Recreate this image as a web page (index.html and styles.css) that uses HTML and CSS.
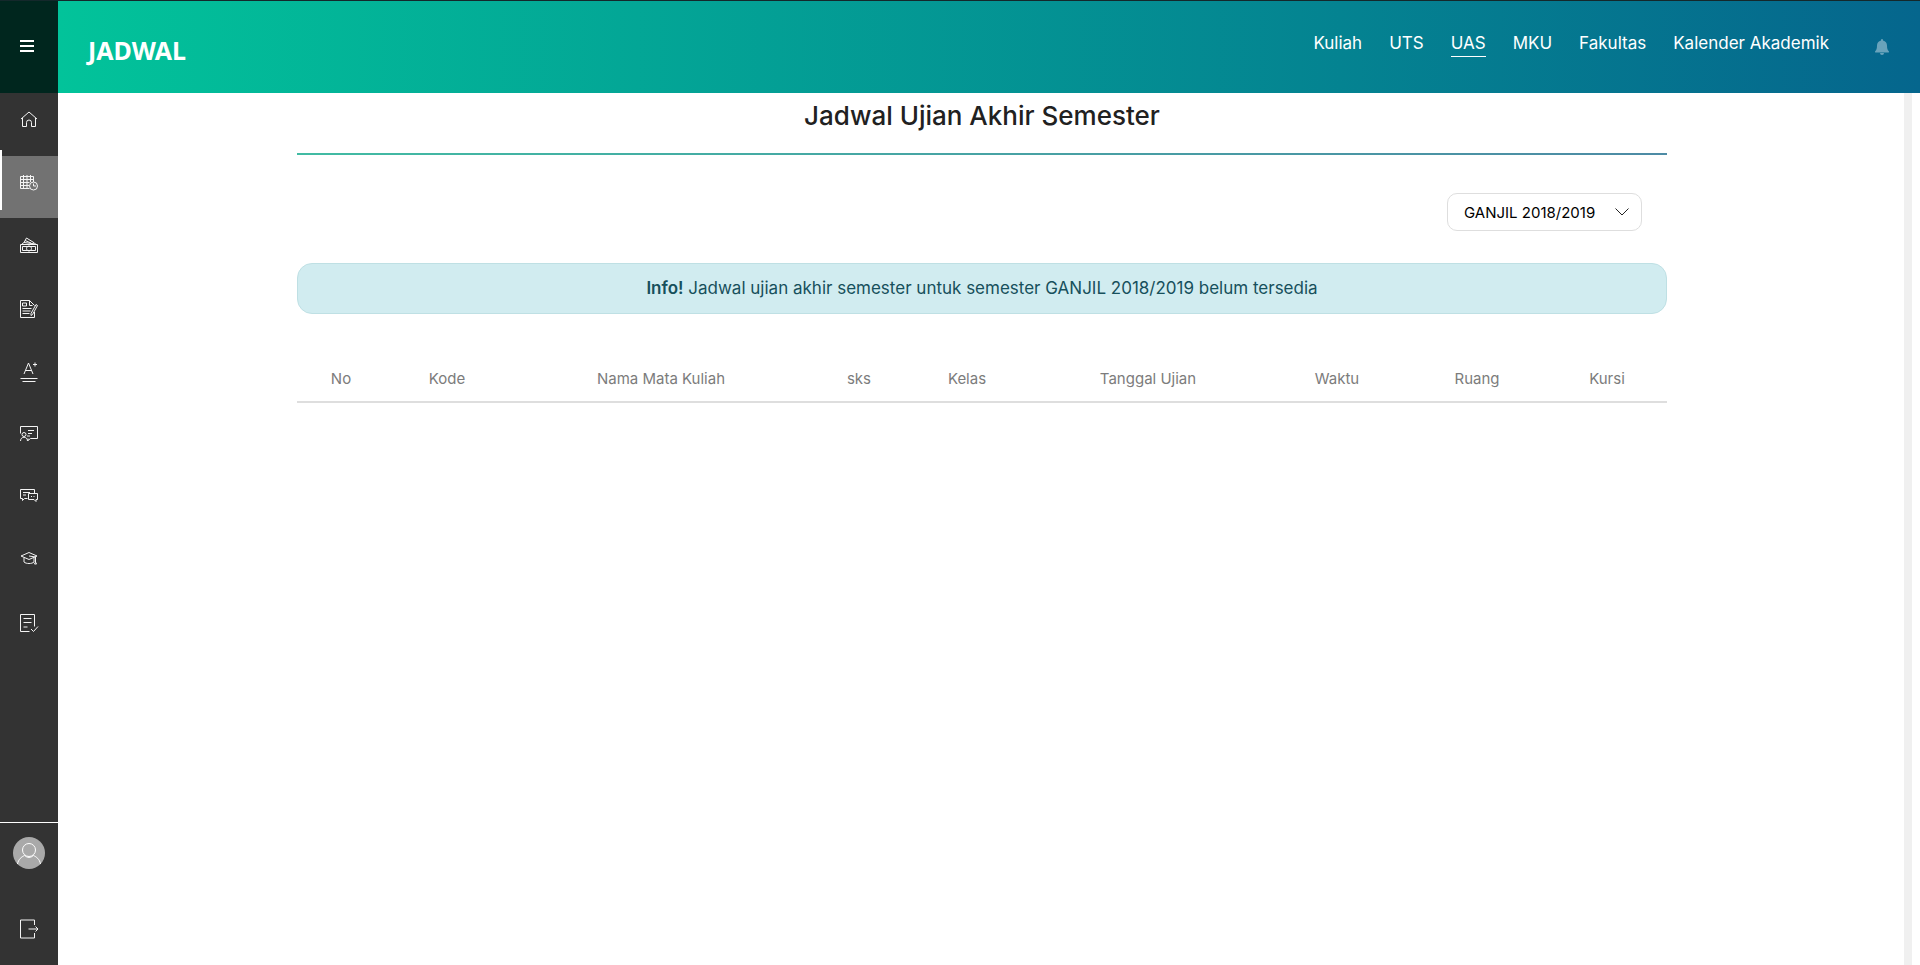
FILE: index.html
```html
<!DOCTYPE html>
<html lang="id">
<head>
<meta charset="utf-8">
<meta name="viewport" content="width=device-width, initial-scale=1">
<title>Jadwal Ujian Akhir Semester</title>
<link rel="stylesheet" href="styles.css">
</head>
<body>
<div class="app">
  <aside class="sidebar">
    <button class="menu-toggle" type="button" aria-label="Menu">
      <svg class="menu-icon" viewBox="0 0 14 12"><path d="M0 0h14v2H0zM0 5h14v2H0zM0 10h14v2H0z"/></svg>
    </button>
    <nav class="side-nav" aria-label="Menu utama">
      <a class="side-link" href="#" aria-label="Beranda">
        <svg class="icon" viewBox="0 0 20 20"><path d="M2 9 10 2l8 7M3.500 8V16.500h4V12.500a2.500 2.500 0 0 1 5 0v4h4V8"/></svg>
      </a>
      <a class="side-link side-link-active" href="#" aria-label="Jadwal" aria-current="page">
        <svg class="icon" viewBox="0 0 20 20"><path d="M10.500 15.500H1.500v-12h13v5.500M1.500 6.500h13M1.500 9.500h9M1.500 12.500h8.500M4.500 2v13.500M8 2v13.500M11.500 2v7"/><circle cx="14.500" cy="13" r="4"/><path d="M14.500 10.500V13h2.500"/></svg>
      </a>
      <a class="side-link" href="#" aria-label="Keuangan">
        <svg class="icon" viewBox="0 0 20 20"><path d="M1.500 8.500h17v8h-17zM3.500 10.500h13v4h-13z"/><circle cx="10" cy="12.500" r="2.500"/><path d="m3 8 2-1.500 12 1.500M5 6.500 7.500 2l8 5M6 4.500l6 2.500"/></svg>
      </a>
      <a class="side-link" href="#" aria-label="Registrasi">
        <svg class="icon" viewBox="0 0 20 20"><path d="M15.500 13v5.500h-14v-17h9l5 5M10.500 1.500v5h3M3.500 4h4v3h-4zM3.500 9.500h9M3.500 12h8M3.500 14.500h7M17 5.500l1.500 1-5 9-1.500 1v-2z"/></svg>
      </a>
      <a class="side-link" href="#" aria-label="Nilai">
        <svg class="icon" viewBox="0 0 20 20"><path d="m5 12 4.500-11L14 12M6.500 8.500h6M16 .5v4M14 2.500h4M1.500 16.500h17M3.500 19.500h13"/></svg>
      </a>
      <a class="side-link" href="#" aria-label="Pembelajaran">
        <svg class="icon" viewBox="0 0 20 20"><path d="M1.500 8.500v-7h17v12h-7l-2.500 2v-2M9 5.500h6M9 8.500h4M8 11h3"/><circle cx="5" cy="9.500" r="2"/><path d="M1.500 16c0-5 7-5 7 0"/></svg>
      </a>
      <a class="side-link" href="#" aria-label="Pesan">
        <svg class="icon" viewBox="0 0 20 20"><path d="M8.500 10.500H5.500l-2 2v-2h-2v-9h14v4M4 4.500h7M4 7h3M9.500 5.500h9v6H17v2l-2-2H9.500zM12 8.500h1M14.500 8.500h1"/></svg>
      </a>
      <a class="side-link" href="#" aria-label="Kelulusan">
        <svg class="icon" viewBox="0 0 20 20"><path d="M2 5 10 1.500 18 5l-8 3.500zM5 6.500v4.500c2 2 8 2 10 0V6.500M10 5l6.500 1v5M15.500 13l1-2 1 2z"/></svg>
      </a>
      <a class="side-link" href="#" aria-label="Evaluasi">
        <svg class="icon" viewBox="0 0 20 20"><path d="M10.500 17.500h-9v-17h14v12M4.500 4.500h8M4.500 8.500h8M4.500 13h4M12 15l2.500 2.500 4.500-5"/></svg>
      </a>
    </nav>
    <div class="side-footer">
      <a class="side-avatar" href="#" aria-label="Profil">
        <svg class="avatar-icon" viewBox="0 0 32 32"><circle class="avatar-disc" cx="16" cy="16" r="16"/><circle cx="16" cy="13" r="6.500"/><path d="M4.500 27c1-5 4-7 7-8.500 3 2.500 6 2.500 9 0 3 1.500 6 3.500 7 8.500"/></svg>
      </a>
      <a class="side-logout" href="#" aria-label="Keluar">
        <svg class="icon" viewBox="0 0 20 20"><path d="M15.500 6v-5h-14v18h14v-5M9.500 10h9.500M16.500 7.500l2.500 2.500-2.500 2.500"/></svg>
      </a>
    </div>
  </aside>
  <div class="page">
    <header class="topbar">
      <h1 class="brand">JADWAL</h1>
      <nav class="tabs" aria-label="Jadwal">
        <a class="tab" href="#">Kuliah</a>
        <a class="tab" href="#">UTS</a>
        <a class="tab tab-active" href="#" aria-current="page">UAS</a>
        <a class="tab" href="#">MKU</a>
        <a class="tab" href="#">Fakultas</a>
        <a class="tab" href="#">Kalender Akademik</a>
      </nav>
      <button class="bell" type="button" aria-label="Notifikasi">
        <svg class="bell-icon" viewBox="0 0 14 16"><path d="M6 1a1 1 0 0 1 2 0v.5c2.500.5 4 2.500 4 5 0 3 .5 4.500 1.800 5.700.5.600.1 1.300-.6 1.300H.8c-.7 0-1.100-.7-.6-1.300C1.500 11 2 9.500 2 6.500c0-2.500 1.500-4.500 4-5zM5 14h4a2 2 0 0 1-4 0z"/></svg>
      </button>
    </header>
    <div class="body-row">
      <main class="content">
        <h2 class="title">Jadwal Ujian Akhir Semester</h2>
        <div class="filter">
          <div class="select-wrap">
            <select class="semester" aria-label="Semester"><option>GANJIL 2018/2019</option></select>
            <svg class="chevron" viewBox="0 0 14 8"><path d="m.5.500 6.500 6.500 6.500-6.500"/></svg>
          </div>
        </div>
        <p class="notice"><strong class="notice-label">Info!</strong> Jadwal ujian akhir semester untuk semester GANJIL 2018/2019 belum tersedia</p>
        <table class="schedule">
          <thead>
            <tr>
              <th class="col-no">No</th>
              <th class="col-code">Kode</th>
              <th class="col-name">Nama Mata Kuliah</th>
              <th class="col-sks">sks</th>
              <th class="col-class">Kelas</th>
              <th class="col-date">Tanggal Ujian</th>
              <th class="col-time">Waktu</th>
              <th class="col-room">Ruang</th>
              <th class="col-seat">Kursi</th>
            </tr>
          </thead>
        </table>
      </main>
      <div class="scroll-track"></div>
    </div>
  </div>
</div>
</body>
</html>
```
FILE: styles.css
```css
* { box-sizing: border-box; }

body {
  margin: 0;
  background: #fff;
  color: #212121;
  font-family: Inter, "Liberation Sans", sans-serif;
  font-size: 17px;
}

.app {
  display: flex;
  min-height: 100vh;
  border-top: 1px solid #14282b;
}

.sidebar {
  display: flex;
  flex-direction: column;
  flex: none;
  width: 58px;
  background: #333;
}

.menu-toggle {
  display: flex;
  align-items: center;
  height: 92px;
  padding: 0 0 2px 20px;
  border: 0;
  background: #00261e;
}

.menu-icon {
  width: 14px;
  height: 12px;
  fill: #fff;
}

.icon {
  width: 20px;
  height: 20px;
  fill: none;
  stroke: #f4f4f4;
  stroke-width: 1;
}

.side-nav {
  display: flex;
  flex-direction: column;
  gap: 1px;
}

.side-link {
  position: relative;
  display: flex;
  align-items: center;
  justify-content: center;
  height: 62px;
  padding-bottom: 8px;
}

.side-link-active { background: #727272; }

.side-link-active::before {
  content: "";
  position: absolute;
  top: -6px;
  left: 0;
  width: 2px;
  height: 60px;
  background: #fff;
}

.side-footer {
  display: flex;
  flex-direction: column;
  align-items: center;
  gap: 50px;
  margin-top: auto;
  padding: 14px 0 26px;
  border-top: 1px solid #fff;
}

.side-avatar,
.side-logout { display: flex; }

.avatar-icon {
  width: 32px;
  height: 32px;
  fill: none;
  stroke: #fff;
  stroke-width: 1;
}

.avatar-disc {
  fill: #a9a9a9;
  stroke: none;
}

.page {
  display: flex;
  flex-direction: column;
  flex: 1;
  min-width: 0;
}

.topbar {
  display: flex;
  align-items: center;
  height: 92px;
  padding: 0 31px 0 30px;
  background: linear-gradient(to right, #02c39a, #05668d);
}

.brand {
  margin: 0;
  padding-top: 6px;
  color: #fff;
  font-family: "Noto Sans", sans-serif;
  font-size: 25px;
  font-weight: 700;
  line-height: 32px;
}

.tabs {
  display: flex;
  gap: 27px;
  margin-left: auto;
  padding-bottom: 6px;
}

.tab {
  padding-bottom: 1px;
  border-bottom: 1px solid transparent;
  color: #fff;
  line-height: 24px;
  text-decoration: none;
}

.tab-active { border-bottom-color: #fff; }

.bell {
  display: flex;
  margin-left: 46px;
  padding: 0;
  border: 0;
  background: none;
}

.bell-icon {
  width: 14px;
  height: 16px;
  fill: #69a3bb;
}

.body-row {
  display: flex;
  flex: 1;
  padding-left: 2px;
}

.content {
  flex: 1;
  max-width: 1370px;
  margin: 0 auto;
}

.scroll-track {
  width: 8px;
  margin-right: 8px;
  background: #f0f0f0;
}

.title {
  margin: 0;
  padding: 7px 0 21px;
  border-bottom: 2px solid;
  border-image: linear-gradient(to right, #41bba3, #4d8ba5) 1;
  font-size: 26px;
  font-weight: 500;
  line-height: 32px;
  text-align: center;
}

.filter {
  display: flex;
  justify-content: flex-end;
  padding: 38px 25px 32px;
}

.select-wrap { position: relative; }

.semester {
  display: block;
  width: 195px;
  height: 38px;
  padding: 0 16px;
  border: 1px solid #dedede;
  border-radius: 10px;
  background: #fff;
  color: #000;
  font-family: inherit;
  font-size: 15px;
  appearance: none;
}

.chevron {
  position: absolute;
  top: 15px;
  right: 13px;
  width: 14px;
  height: 8px;
  fill: none;
  stroke: #222;
  pointer-events: none;
}

.notice {
  margin: 0;
  padding: 12px 20px;
  border: 1px solid #bfe0e4;
  border-radius: 15px;
  background: #d1ecf0;
  color: #17505c;
  line-height: 25px;
  text-align: center;
}

.notice-label { font-weight: 600; }

.schedule {
  width: 100%;
  margin-top: 45px;
  border-collapse: collapse;
  border-bottom: 2px solid #dedede;
  table-layout: fixed;
}

.schedule th {
  padding: 10px 0 12px;
  color: #7c7c7c;
  font-size: 15px;
  font-weight: 400;
  line-height: 20px;
  text-align: center;
}

.col-no { width: 88px; }
.col-code { width: 124px; }
.col-name { width: 304px; }
.col-sks { width: 92px; }
.col-class { width: 124px; }
.col-date { width: 238px; }
.col-time { width: 140px; }
.col-room { width: 140px; }
.col-seat { width: 120px; }
```
